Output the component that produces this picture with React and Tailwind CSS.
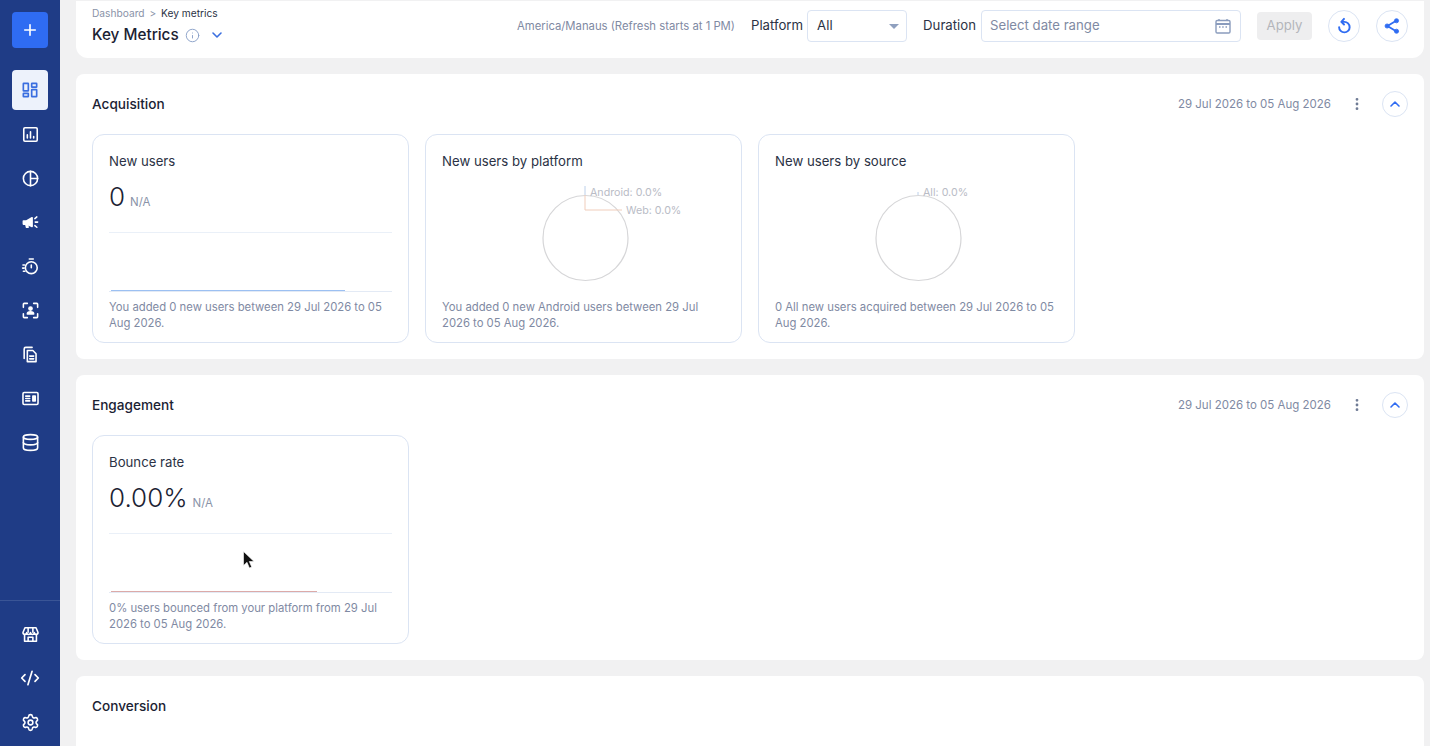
import React from 'react';
import { Plus, Info, ChevronDown, ChevronUp, EllipsisVertical, CodeXml, Settings, Database } from 'lucide-react';

const Icon = ({ children, className = 'w-[19px] h-[19px]' }) => (
    <svg viewBox="0 0 24 24" fill="none" stroke="currentColor" strokeWidth="2" strokeLinecap="round" strokeLinejoin="round" className={className}>
        {children}
    </svg>
);

const topIcons = [
    <Icon key="reports">
        <rect x="3.500" y="3.500" width="17" height="17" rx="1.500" />
        <path d="M8 16.500v-4M12 16.500v-8M16 16.500v-2" />
    </Icon>,
    <Icon key="pie">
        <circle cx="12" cy="12" r="9" />
        <path d="M12 3v18M12 12h9" />
    </Icon>,
    <Icon key="campaign">
        <path d="M3 10h4l7-4v11l-7-3H3z" fill="currentColor" />
        <path d="M6 14l1 4h2l-1-4M18 11.500h3M17.500 7l2.500-2M17.500 16l2.500 2" />
    </Icon>,
    <Icon key="timer">
        <circle cx="13" cy="13.500" r="7.500" />
        <path d="M13 13.500V10M10.500 2.500h5M2.500 10h2M2 14h2M3 18h2" />
    </Icon>,
    <Icon key="users">
        <path d="M8 3H4a1 1 0 0 0-1 1v4M16 3h4a1 1 0 0 1 1 1v4M8 21H4a1 1 0 0 1-1-1v-4M16 21h4a1 1 0 0 0 1-1v-4" />
        <circle cx="12" cy="9.500" r="2" fill="currentColor" />
        <path d="M8 16.500c0-2 1.500-3 4-3s4 1 4 3z" fill="currentColor" />
    </Icon>,
    <Icon key="pages">
        <path d="M4 17V5a2 2 0 0 1 2-2h8" />
        <path d="M8 7h7l4 4v10H8z" />
        <path d="M11 14h5M11 17.500h5" />
    </Icon>,
    <Icon key="news">
        <rect x="2.500" y="4.500" width="19" height="15" rx="1.500" />
        <path d="M6 9h5M6 12h5M6 15h5" />
        <rect x="15" y="9" width="3" height="6" fill="currentColor" />
    </Icon>,
    <Database key="db" className="w-[19px] h-[19px]" strokeWidth={2} />,
];

const Store = () => (
    <Icon>
        <path d="M5 3.500h14l2.500 6a2.300 2.300 0 0 1-4.700 0 2.400 2.400 0 0 1-4.800 0 2.400 2.400 0 0 1-4.800 0 2.300 2.300 0 0 1-4.700 0z" />
        <path d="M4.500 12.500V20.500h15V12.500M9 20.500v-5h6v5M9 4v5M15 4v5" />
    </Icon>
);

const Sidebar = () => (
    <aside className="w-[60px] h-[746px] shrink-0 bg-[#1f3c86] flex flex-col items-center text-white">
        <button className="mt-3 w-9 h-9 rounded bg-[#2f6cf2] flex items-center justify-center">
            <Plus className="w-[18px] h-[18px]" strokeWidth={2.2} />
        </button>
        <div className="mt-[22px] w-9 h-10 rounded bg-[#edf2fb] flex items-center justify-center text-[#3b6fe0]">
            <Icon className="w-5 h-5">
                <rect x="4" y="4" width="6" height="9" rx="0.500" />
                <rect x="14" y="4" width="6" height="4.500" rx="0.500" />
                <rect x="14" y="11.500" width="6" height="8.500" rx="0.500" />
                <rect x="4" y="16" width="6" height="4" rx="0.500" />
            </Icon>
        </div>
        <div className="flex flex-col items-center mt-[2px]">
            {topIcons.map((icon, i) => (
                <div key={i} className="h-11 w-9 flex items-center justify-center">{icon}</div>
            ))}
        </div>
        <div className="mt-auto mb-[2px] w-full border-t border-[#3a5596] pt-[11px] flex flex-col items-center">
            <div className="h-11 w-9 flex items-center justify-center"><Store /></div>
            <div className="h-11 w-9 flex items-center justify-center"><CodeXml className="w-5 h-5" strokeWidth={2} /></div>
            <div className="h-11 w-9 flex items-center justify-center"><Settings className="w-[19px] h-[19px]" strokeWidth={2} /></div>
        </div>
    </aside>
);

const Header = () => (
    <header className="h-[57px] shrink-0 mt-px bg-white rounded-b-xl pl-4 pr-4 pb-[7px] flex items-center">
        <div className="flex flex-col pt-[2px]">
            <div className="text-[10.2px] leading-3 text-[#8a93a8] mt-[-2px]">
                Dashboard <span className="mx-[2px]">&gt;</span> <span className="text-[#2b3245]">Key metrics</span>
            </div>
            <div className="flex items-center mt-[6px]">
                <span className="text-[15.300px] leading-5 font-medium text-[#1b2233]">Key Metrics</span>
                <Info className="w-[15px] h-[15px] ml-[6px] text-[#8aa0c8]" strokeWidth={1.500} />
                <ChevronDown className="w-4 h-4 ml-[9px] text-[#3b6fe0]" strokeWidth={2.400} />
            </div>
        </div>
        <div className="ml-auto flex items-center">
            <span className="text-[11.300px] text-[#7f8aa3]">America/Manaus (Refresh starts at 1 PM)</span>
            <span className="ml-4 text-[13.200px] text-[#2b3245]">Platform</span>
            <div className="ml-1 w-[100px] h-[32px] rounded border border-[#dbe4f3] pl-[9px] pr-[7px] flex items-center justify-between text-[13.200px] text-[#2b3245]">
                All
                <span className="w-0 h-0 border-x-[5px] border-x-transparent border-t-[5px] border-t-[#8fa0bf]" />
            </div>
            <span className="ml-4 text-[13.200px] text-[#2b3245]">Duration</span>
            <div className="ml-[5px] w-[260px] h-[32px] rounded border border-[#dbe4f3] pl-2 pr-[9px] flex items-center justify-between text-[13.200px] text-[#7f8aa3]">
                Select date range
                <svg viewBox="0 0 16 16" className="w-4 h-4 text-[#8a9cbd]" fill="none" stroke="currentColor" strokeWidth="1.400">
                    <rect x="1" y="2.500" width="14" height="12.500" rx="1.200" />
                    <path d="M1 6h14" strokeWidth="2" />
                    <path d="M4 1v2M12 1v2" />
                    <path d="M4 9h1.500M7.200 9h1.500M10.500 9H12" />
                </svg>
            </div>
            <button className="ml-4 w-[55px] h-7 rounded bg-[#eeeeef] text-[13.200px] text-[#b4b6bb]">Apply</button>
            <div className="ml-4 w-8 h-8 rounded-full border border-[#dbe4f3] flex items-center justify-center text-[#2f6cf2]">
                <Icon className="w-[18px] h-[18px]">
                    <path d="M5.500 13.500a7 7 0 1 0 7-7H9" strokeWidth="2.600" />
                    <path d="M12 2.500 8.500 6.500l3.500 3.500" strokeWidth="2.600" />
                </Icon>
            </div>
            <div className="ml-4 w-8 h-8 rounded-full border border-[#dbe4f3] flex items-center justify-center text-[#2f6cf2]">
                <svg viewBox="0 0 24 24" className="w-[18px] h-[18px]" fill="currentColor" stroke="currentColor">
                    <path d="M17.500 5 6 12l11.500 7" fill="none" strokeWidth="2.400" />
                    <circle cx="18" cy="5" r="2.800" />
                    <circle cx="5.500" cy="12" r="2.800" />
                    <circle cx="18" cy="19" r="2.800" />
                </svg>
            </div>
        </div>
    </header>
);

const Section = ({ title, children, showRange = true }) => (
    <section className="h-[285px] shrink-0 bg-white rounded-lg px-4">
        <div className="h-[60px] flex items-center">
            <h2 className="text-[13.600px] font-medium text-[#1b2233]">{title}</h2>
            {showRange && (
                <div className="ml-auto flex items-center">
                    <span className="mt-[2px] text-[11.500px] text-[#7f8aa3]">29 Jul 2026 to 05 Aug 2026</span>
                    <EllipsisVertical className="w-4 h-4 ml-[18px] text-[#6f7b95]" strokeWidth={2.200} />
                    <div className="ml-[17px] w-[26px] h-[26px] rounded-full border border-[#dbe4f3] flex items-center justify-center text-[#2f6cf2]">
                        <ChevronUp className="w-4 h-4" strokeWidth={2.400} />
                    </div>
                </div>
            )}
        </div>
        {children && <div className="flex gap-4">{children}</div>}
    </section>
);

const Card = ({ title, note, children }) => (
    <div className="w-[317px] h-[209px] rounded-xl border border-[#dbe4f3] px-4 pt-4 flex flex-col">
        <h3 className="text-[13.200px] leading-5 text-[#2b3245]">{title}</h3>
        {children}
        <p className="mt-auto mb-[11px] text-[11.300px] leading-4 text-[#7f8aa3]">{note}</p>
    </div>
);

const StatBody = ({ value, lineColor, lineWidth }) => (
    <>
        <div className="mt-[10px] h-[52px] flex items-baseline border-b border-[#eaf0f8]">
            <span className="text-[26px] leading-8 font-light text-[#1b2233]">{value}</span>
            <span className="ml-[5px] text-[11.500px] text-[#8a93a8]">N/A</span>
        </div>
        <div className="mt-[58px] border-b border-[#e3eaf5] relative">
            <div className={`absolute left-[2px] -top-px h-px ${lineWidth} ${lineColor}`} />
        </div>
    </>
);

const PieBody = ({ lines, texts }) => (
    <svg viewBox="0 0 283 105" className="mt-[6px] w-[283px] h-[105px] overflow-visible">
        <circle cx="143.500" cy="61" r="42.500" fill="none" stroke="#d6d6d8" strokeWidth="1.200" />
        {lines}
        {texts}
    </svg>
);

export default function App() {
    return (
        <div className="relative w-[1430px] h-[746px] overflow-hidden flex bg-[#f1f1f2] font-['Inter','Liberation_Sans',sans-serif]">
            <Sidebar />
            <main className="flex-1 min-w-0 pl-4 pr-[6px] flex flex-col gap-4 overflow-hidden">
                <Header />
                <Section title="Acquisition">
                    <Card title="New users" note="You added 0 new users between 29 Jul 2026 to 05 Aug 2026.">
                        <StatBody value="0" lineColor="bg-[#9cc0f2]" lineWidth="w-[234px]" />
                    </Card>
                    <Card title="New users by platform" note="You added 0 new Android users between 29 Jul 2026 to 05 Aug 2026.">
                        <PieBody
                            lines={
                                <>
                                    <path d="M143 18V9" stroke="#bcd0ea" fill="none" />
                                    <path d="M143 18v15h37" stroke="#f0cdbb" fill="none" />
                                </>
                            }
                            texts={
                                <>
                                    <text x="148" y="19" fontSize="10.700" fill="#b9bcc6">Android: 0.0%</text>
                                    <text x="184" y="37" fontSize="10.700" fill="#b9bcc6">Web: 0.0%</text>
                                </>
                            }
                        />
                    </Card>
                    <Card title="New users by source" note="0 All new users acquired between 29 Jul 2026 to 05 Aug 2026.">
                        <PieBody
                            lines={<path d="M143 18v-3" stroke="#bcd0ea" fill="none" />}
                            texts={<text x="148" y="19" fontSize="10.700" fill="#b9bcc6">All: 0.0%</text>}
                        />
                    </Card>
                </Section>
                <Section title="Engagement">
                    <Card title="Bounce rate" note="0% users bounced from your platform from 29 Jul 2026 to 05 Aug 2026.">
                        <StatBody value="0.00%" lineColor="bg-[#dcaaa8]" lineWidth="w-[206px]" />
                    </Card>
                </Section>
                <Section title="Conversion" showRange={false} />
            </main>
            <svg viewBox="0 0 12 18" className="absolute left-[243px] top-[551px] w-3 h-[18px]">
                <path d="M0.500 0.500v14l3.500-3.200 2.400 5.700 2.300-1-2.400-5.500h4.700z" fill="#111" stroke="#fff" strokeWidth="0.600" />
            </svg>
        </div>
    );
}
